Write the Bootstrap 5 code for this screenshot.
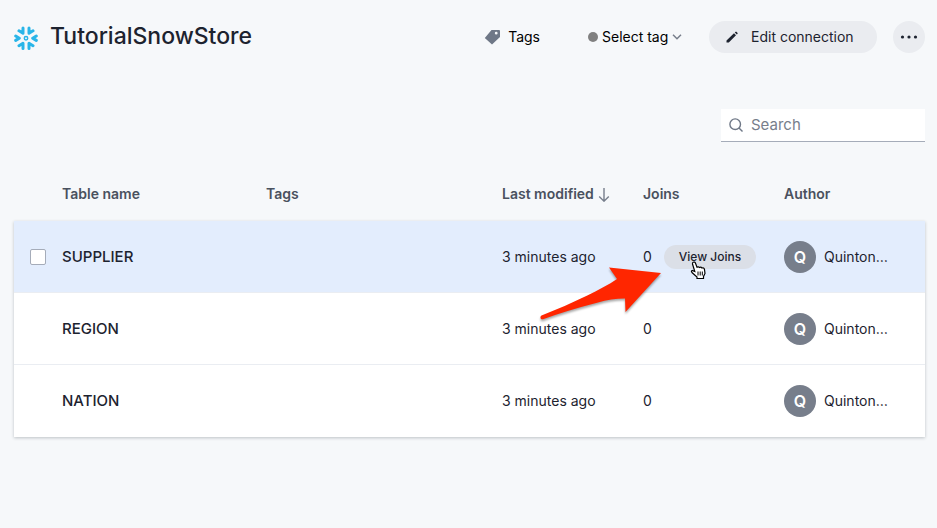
<!DOCTYPE html>
<html lang="en">
<head>
<meta charset="utf-8">
<meta name="viewport" content="width=device-width, initial-scale=1">
<title>TutorialSnowStore</title>
<link href="https://cdn.jsdelivr.net/npm/bootstrap@5.3.0/dist/css/bootstrap.min.css" rel="stylesheet">
<style>
  body { background: #f6f8fa; color: #1d232f; font: 14px/20px Inter, "Liberation Sans", sans-serif; }
  .page { padding: 21px 12px 24px 14px; }
  .store-title { font-size: 23px; line-height: 30px; font-weight: 500; padding-bottom: 2px; }
  .tag-label, .tag-select { color: #000; }
  .tag-select {
    width: 81px; padding: 0; border: 0; font-size: 14px; line-height: 20px;
    background: transparent url("data:image/svg+xml,%3Csvg xmlns='http://www.w3.org/2000/svg' viewBox='0 0 10 6'%3E%3Cpath fill='none' stroke='%23777e8b' stroke-width='1.5' d='M1 .8l4 4 4-4'/%3E%3C/svg%3E") no-repeat right 1px center / 10px 6px;
  }
  .dot { width: 10px; height: 10px; background: #808080; }
  .btn-soft { --bs-btn-hover-bg: #dbdfe7; --bs-btn-color: #1d232f; font-size: 14px; line-height: 20px; background: #eaecf0; border: 0; }
  .btn-edit { width: 168px; height: 32px; padding: 0 16px; margin-left: 26px; gap: 12px; }
  .btn-more { width: 32px; height: 32px; }
  .search-box { width: 204px; height: 33px; margin-top: 56px; padding: 0 8px; background: #fff; border-bottom: 1px solid #a5acb9; }
  .search-box input { font-size: 15px; line-height: 24px; color: #1d232f; }
  .search-box input::placeholder { color: #777e8b; }
  .data-table { table-layout: fixed; margin-top: 25px; color: #1d232f; border-collapse: separate; border-spacing: 0; }
  .data-table th, .data-table td { padding: 0; vertical-align: middle; text-align: left; white-space: nowrap; }
  .data-table thead th { height: 54px; font-weight: 600; color: #4a515e; }
  .data-table tbody { box-shadow: 0 1px 3px rgba(25, 35, 49, .25); }
  .data-table tbody > tr > * { height: 72px; background: #fff; border-bottom: 1px solid #eaedf2; }
  .data-table tbody > tr:last-child > * { border-bottom-color: #fff; }
  .data-table tbody > tr.active-row > * { background: #e3edfd; }
  .data-table tbody th { font-size: 15px; font-weight: 500; }
  .col-check { width: 48px; } .col-title { width: 204px; } .col-meta { width: 141px; }
  .row-check { width: 16px; height: 16px; border: 1px solid #a5acb9; border-radius: 2px !important; }
  .btn-joins { width: 92px; height: 24px; padding: 0; font-size: 12px; line-height: 16px; font-weight: 500; background: #dbdfe7; border: 0; color: #1d232f; }
  .avatar { width: 32px; height: 32px; background: #777e8b; color: #fff; font-size: 16px; font-weight: 600; }
  .callout { position: absolute; left: -126px; top: 17px; z-index: 2; pointer-events: none; overflow: visible; filter: drop-shadow(0 2px 1px rgba(0, 0, 0, .35)); }
  .pointer { position: absolute; left: 26px; top: 16px; z-index: 3; pointer-events: none; }
</style>
</head>
<body>
<main class="page">
  <header class="d-flex align-items-center">
    <svg class="me-2" width="24" height="25" viewBox="0 0 24 25" fill="none" stroke="#29b5e8" stroke-width="3" stroke-linecap="round" stroke-linejoin="round" aria-hidden="true">
      <path d="M9 3v5.200L5 5.800M15 3v5.200l4-2.400M9 23.500v-5.200l-4 2.400M15 23.500v-5.200l4 2.400M1.700 11l3.600 2.200-3.600 2.200M22.300 11l-3.600 2.200 3.600 2.200"/>
      <circle cx="12" cy="13.200" r="1.700" stroke-width="1.500"/>
    </svg>
    <h1 class="store-title mb-0 ms-1">TutorialSnowStore</h1>
    <div class="d-flex align-items-center ms-auto">
      <svg class="me-2" width="16" height="16" viewBox="0 0 16 16" fill="#6f7887" aria-hidden="true"><path fill-rule="evenodd" d="M7.500 1H15a1 1 0 0 1 1 1v6L8 15.500.800 9zM12.200 2.800a1.400 1.400 0 1 0 0 2.800 1.400 1.400 0 0 0 0-2.800"/></svg>
      <label class="tag-label" for="tagSelect">Tags</label>
      <span class="dot rounded-circle ms-5 me-1"></span>
      <select class="form-select tag-select rounded-0" id="tagSelect"><option>Select tag</option></select>
      <button class="btn btn-soft btn-edit rounded-pill d-flex align-items-center" type="button">
        <svg width="14" height="14" viewBox="0 0 14 14" fill="#1d232f" aria-hidden="true"><path d="M1.500 10.500L9 3.300l2 2L3.800 12.500H1.500zM9.800 2.500l.6-.6q.6-.6 1.200 0l.8.800q.6.600 0 1.200l-.6.600z"/></svg>
        Edit connection
      </button>
      <button class="btn btn-soft btn-more rounded-circle p-0 ms-3 d-flex align-items-center justify-content-center" type="button" aria-label="More">
        <svg width="18" height="4" viewBox="0 0 18 4" fill="#1d232f"><circle cx="2.500" cy="2" r="1.600"/><circle cx="9" cy="2" r="1.600"/><circle cx="15.500" cy="2" r="1.600"/></svg>
      </button>
    </div>
  </header>

  <div class="search-box d-flex align-items-center ms-auto">
    <svg class="flex-shrink-0 me-2" width="14" height="14" viewBox="0 0 14 14" fill="none" stroke="#6f7887" stroke-width="1.400" aria-hidden="true"><circle cx="6.200" cy="6.200" r="5.300"/><path d="M10 10l3.500 3.500"/></svg>
    <input class="form-control border-0 bg-transparent p-0 shadow-none" type="search" placeholder="Search" aria-label="Search">
  </div>

  <table class="data-table w-100">
    <colgroup><col class="col-check"><col class="col-title"><col><col class="col-meta"><col class="col-meta"><col class="col-meta"></colgroup>
    <thead>
      <tr>
        <td></td>
        <th scope="col">Table name</th>
        <th scope="col">Tags</th>
        <th scope="col">Last modified<svg class="ms-1" width="12" height="14" viewBox="0 0 12 14" fill="none" stroke="#777e8b" stroke-width="1.400" aria-hidden="true"><path d="M6 0v13M1.200 8.500L6 13.200l4.800-4.700"/></svg></th>
        <th scope="col">Joins</th>
        <th scope="col">Author</th>
      </tr>
    </thead>
    <tbody>
      <tr class="active-row">
        <td><input class="form-check-input row-check d-block m-0 ms-3" type="checkbox" aria-label="Select SUPPLIER"></td>
        <th scope="row">SUPPLIER</th>
        <td></td>
        <td>3 minutes ago</td>
        <td>
          <div class="d-flex align-items-center">
            <span>0</span>
            <div class="position-relative ms-auto me-4 pe-1">
              <button class="btn btn-joins rounded-pill d-block" type="button">View Joins</button>
              <svg class="callout" width="128" height="62" viewBox="0 0 128 62" fill="#ff2600" aria-hidden="true"><path d="M123 11L71 5.500 79 17C71 22.500 60 28 49.300 33.500Q28 44 3.500 53.500C1.500 54.800 2.500 58 5 57.200Q29 48.500 60 40.500 73 36.500 87 36.500L87.500 50Z"/></svg>
              <svg class="pointer" width="17" height="19" viewBox="0 0 17 19" aria-hidden="true"><path d="M3.200 1.200Q4.800.500 5.500 2.200L7 6.200Q8.500 5.200 9.400 6.500 11 5.600 11.900 7 14 6.300 14.500 8.500L15 12.500 13.500 15.500V17.500H7V16L2.200 11.800Q.600 10 2.200 9.500L4.800 10.500 2.500 3Q2.200 1.800 3.200 1.200Z" fill="#fff" stroke="#000" stroke-width="1.200"/><path d="M8 10.500v4M10.200 10.500v4M12.300 10.500v4" stroke="#000"/></svg>
            </div>
          </div>
        </td>
        <td><div class="d-flex align-items-center"><span class="avatar rounded-circle d-flex align-items-center justify-content-center me-2">Q</span>Quinton…</div></td>
      </tr>
      <tr>
        <td></td>
        <th scope="row">REGION</th>
        <td></td>
        <td>3 minutes ago</td>
        <td>0</td>
        <td><div class="d-flex align-items-center"><span class="avatar rounded-circle d-flex align-items-center justify-content-center me-2">Q</span>Quinton…</div></td>
      </tr>
      <tr>
        <td></td>
        <th scope="row">NATION</th>
        <td></td>
        <td>3 minutes ago</td>
        <td>0</td>
        <td><div class="d-flex align-items-center"><span class="avatar rounded-circle d-flex align-items-center justify-content-center me-2">Q</span>Quinton…</div></td>
      </tr>
    </tbody>
  </table>
</main>
<script src="https://cdn.jsdelivr.net/npm/bootstrap@5.3.0/dist/js/bootstrap.bundle.min.js"></script>
</body>
</html>
